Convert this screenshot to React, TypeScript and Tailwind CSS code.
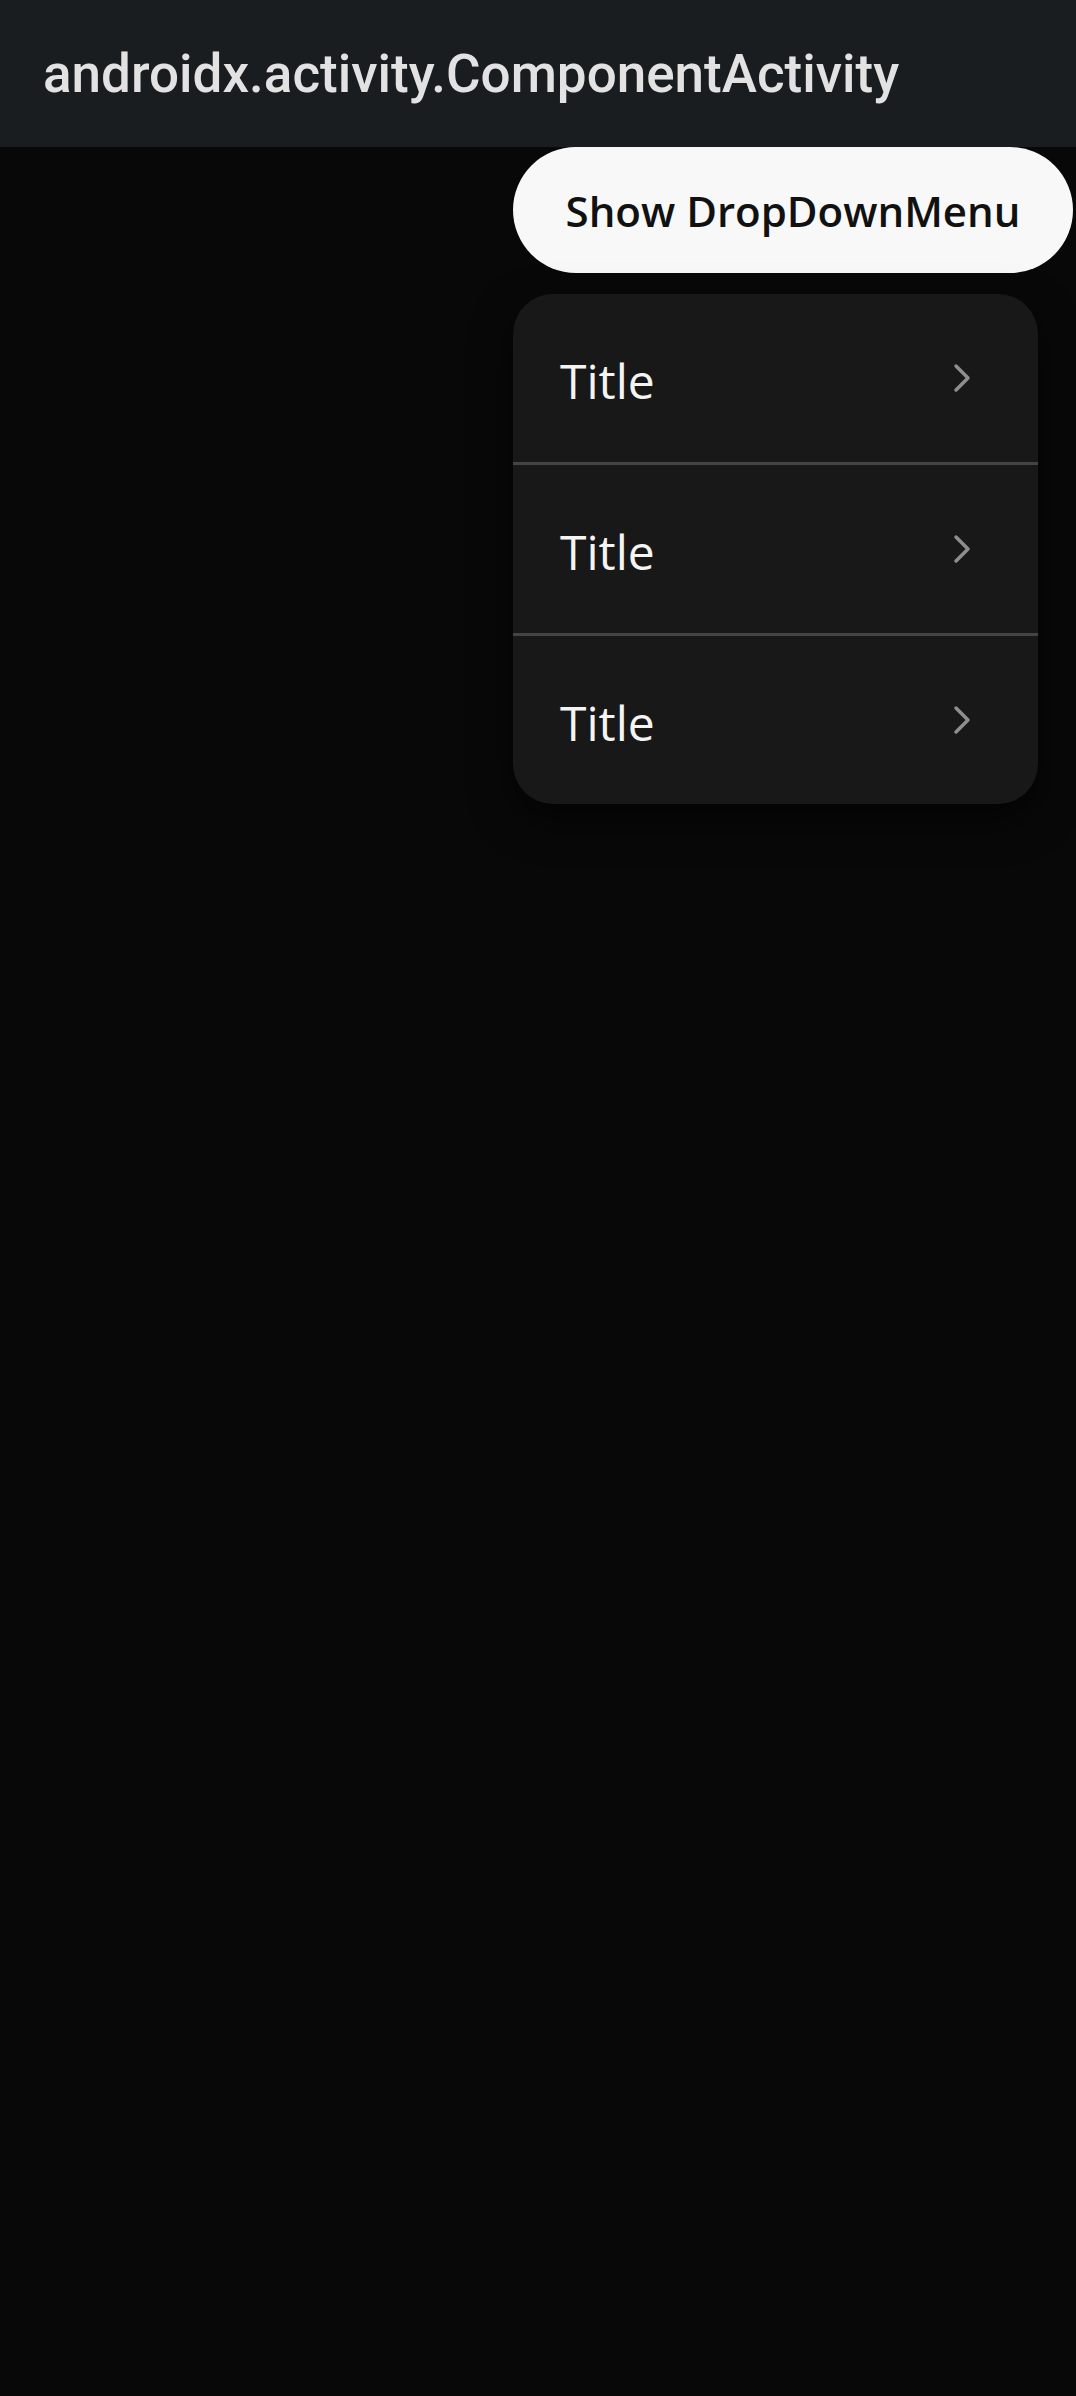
import React from 'react';

const ChevronRight: React.FC = () => (
    <svg width="18" height="30" viewBox="0 0 18 30" fill="none" className="shrink-0">
        <path d="M3 3 L15 15 L3 27" stroke="#8e8e8e" strokeWidth="3.5" strokeLinecap="round" strokeLinejoin="round" />
    </svg>
);

const MenuRow: React.FC<{ title: string }> = ({ title }) => (
    <div className="h-[168px] flex items-center justify-between pl-[47px] pr-[67px]">
        <span className="pt-[5px] text-[48px] text-[#f4f4f4] font-['Open_Sans',sans-serif] leading-none">{title}</span>
        <ChevronRight />
    </div>
);

const App: React.FC = () => {
    const items = ['Title', 'Title', 'Title'];

    return (
        <div className="min-h-[2396px] w-full bg-[#080808]">
            <header className="h-[147px] bg-[#1a1d20] flex items-center pl-[43px]">
                <h1 className="pt-[2px] text-[53px] font-medium text-[#e2e2e2] font-['Roboto',sans-serif] leading-none">
                    androidx.activity.ComponentActivity
                </h1>
            </header>

            <main className="ml-[513px] flex flex-col items-start">
                <button className="h-[126px] w-[560px] rounded-full bg-[#f8f8f8] text-[#111111] text-[42px] font-semibold font-['Open_Sans',sans-serif]">
                    Show DropDownMenu
                </button>

                <div className="mt-[21px] w-[525px] rounded-[40px] bg-[#181818] overflow-hidden shadow-[0_16px_40px_rgba(0,0,0,0.6)]">
                    {items.map((t, i) => (
                        <React.Fragment key={i}>
                            {i > 0 && <div className="h-[3px] bg-[#444444]" />}
                            <MenuRow title={t} />
                        </React.Fragment>
                    ))}
                </div>
            </main>
        </div>
    );
};

export default App;
